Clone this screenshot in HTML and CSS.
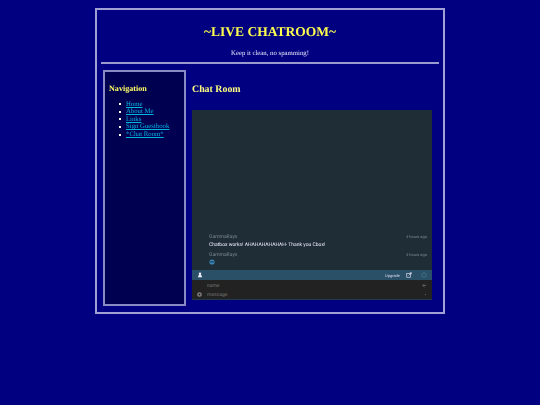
FILE: index.html
```html
<!DOCTYPE html>
<html>
<head>
<meta charset="utf-8">
<title>Live Chatroom</title>
<link rel="stylesheet" href="styles.css">
</head>
<body>
<div class="wrap">
  <header class="head">
    <h1>~LIVE CHATROOM~</h1>
    <p>Keep it clean, no spamming!</p>
  </header>
  <hr class="rule">
  <div class="cols">
    <nav class="side">
      <h3>Navigation</h3>
      <ul>
        <li><a href="#">Home</a></li>
        <li><a href="#">About Me</a></li>
        <li><a href="#">Links</a></li>
        <li><a href="#">Sign Guestbook</a></li>
        <li><a href="#">*Chat Room*</a></li>
      </ul>
    </nav>
    <main class="main">
      <h2>Chat Room</h2>
      <div class="chat">
        <div class="msgs">
          <div class="msg">
            <div class="meta"><span>GammaRays</span><span class="time">4 hours ago</span></div>
            <div class="body">Chatbox works! AHAHAHAHAHAH- Thank you Cbox!</div>
          </div>
          <div class="msg">
            <div class="meta"><span>GammaRays</span><span class="time">4 hours ago</span></div>
            <svg class="emoji" viewBox="0 0 6 6"><circle cx="3" cy="3" r="2.6" fill="#3b86b5"/><rect x="1.2" y="2.4" width="3.6" height="1" fill="#0f3550"/></svg>
          </div>
        </div>
        <div class="bar">
          <svg class="user" viewBox="0 0 8 8"><circle cx="4" cy="2.4" r="1.6" fill="#eef"/><path d="M1 7 L2.6 3.6 H5.4 L7 7 Z" fill="#eef"/></svg>
          <span class="upg">Upgrade</span>
          <svg class="ext" viewBox="0 0 8 8"><rect x="1" y="2" width="5" height="5" fill="none" stroke="#dde" stroke-width=".9"/><path d="M3.5 4.5 L7 1 M5 1 H7.2 V3" fill="none" stroke="#dde" stroke-width=".9"/></svg>
          <svg class="info" viewBox="0 0 8 8"><circle cx="4" cy="4" r="3" fill="none" stroke="#4f7f98" stroke-width=".8"/></svg>
        </div>
        <div class="form">
          <div class="row"><span class="lbl">name</span><svg class="mini" viewBox="0 0 6 6"><path d="M.5 3 H5 M3 1 L1 3 L3 5" fill="none" stroke="#666" stroke-width="1"/></svg></div>
          <div class="row"><svg class="gear" viewBox="0 0 6 6"><circle cx="3" cy="3" r="2" fill="none" stroke="#888" stroke-width="1.6"/></svg><span class="lbl">message</span><span class="dot"></span></div>
        </div>
      </div>
    </main>
  </div>
</div>
</body>
</html>
```
FILE: styles.css
```css
html, body { margin: 0; padding: 0; }
body { background: #000080; font-family: "Liberation Serif", serif; color: #fff; height: 405px; overflow: hidden; text-rendering: geometricPrecision; }
.wrap { box-sizing: border-box; width: 350px; height: 306px; margin: 8px 0 0 95px; border: 2px solid #a0a0d4; padding: 0 4px; filter: blur(.3px); }
.head { height: 52px; text-align: center; overflow: hidden; }
.head h1 { margin: 13px 0 0; font-size: 13.5px; line-height: 18px; color: #ffff4d; font-weight: bold; }
.head p { margin: 8px 0 0; font-size: 6.75px; line-height: 10px; color: #e8e8ff; }
.rule { margin: 0; height: 2px; border: 0; background: #9a9ad0; }
.cols { display: flex; margin-top: 6px; padding-left: 2px; }
.side { box-sizing: border-box; width: 83px; height: 236px; background: #000050; border: 2px solid #8a8ac4; padding: 0 4px; flex: none; }
.side h3 { margin: 11.5px 0 0; font-size: 8.1px; line-height: 10px; color: #ffff66; font-weight: bold; }
.side ul { margin: 7px 0 0; padding: 0 0 0 10px; list-style: none; font-size: 6.75px; line-height: 7.6px; }
.side li { display: flex; align-items: center; gap: 5px; }
.side li::before { content: ""; width: 2px; height: 2px; background: #fff; flex: none; }
.side a { color: #00b4e0; }
.main { margin-left: 6px; width: 240px; flex: none; }
.main h2 { margin: 12.5px 0 0; font-size: 9.9px; line-height: 13px; color: #ffff80; font-weight: bold; }
.chat { margin-top: 14.5px; height: 190px; width: 240px; background: #1f2d36; display: flex; flex-direction: column; font-family: Roboto, sans-serif; }
.msgs { flex: 1; display: flex; flex-direction: column; justify-content: flex-end; padding: 0 5px 5px 17px; }
.msg { margin-top: 3.5px; }
.meta { display: flex; justify-content: space-between; font-size: 5px; line-height: 6px; color: #7d8b92; }
.time { font-size: 4px; color: #7d8b92; }
.body { font-size: 5px; line-height: 8px; color: #eef; margin-top: 0.5px; }
.emoji { display: block; width: 6px; height: 6px; margin-top: 1px; }
.bar { height: 10px; background: #2a5068; display: flex; align-items: center; padding: 0 5px; gap: 6px; }
.user { width: 6px; height: 6px; margin-right: auto; }
.upg { font-size: 4px; color: #dde; }
.ext { width: 6px; height: 6px; }
.info { width: 6px; height: 6px; margin-left: 3px; }
.form { height: 20px; background: #222; border-bottom: 1px solid #1f3a4a; box-sizing: border-box; padding: 1px 5px 0; }
.row { height: 9px; display: flex; align-items: center; font-size: 5px; color: #777; position: relative; padding-left: 10px; }
.lbl { flex: 1; }
.gear { width: 5px; height: 5px; position: absolute; left: 0; }
.mini { width: 5px; height: 5px; }
.dot { width: 1px; height: 1px; background: #666; margin-right: 1px; }
```
